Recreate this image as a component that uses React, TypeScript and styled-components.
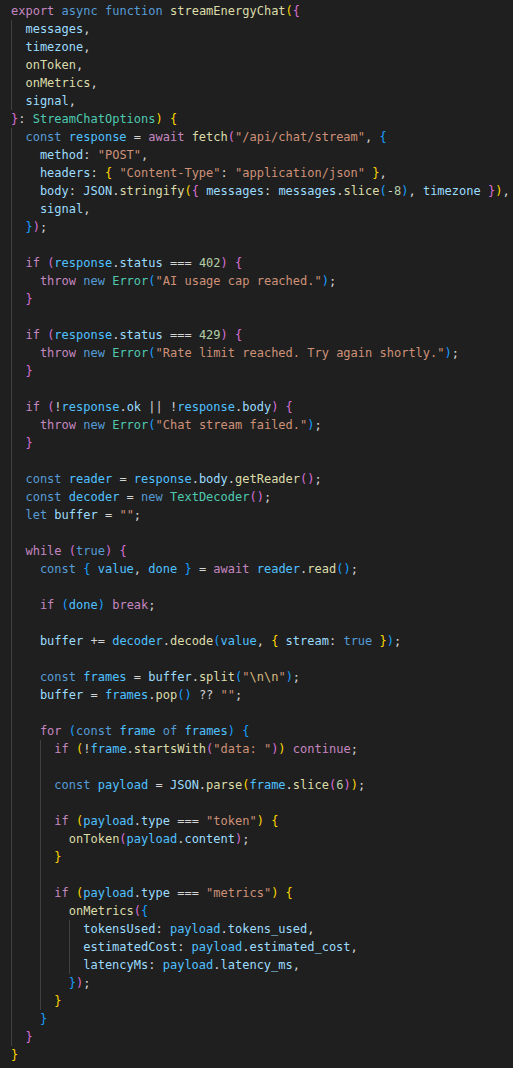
import React from "react";
import styled, { createGlobalStyle } from "styled-components";

const GlobalStyle = createGlobalStyle`
  html, body {
    margin: 0;
    padding: 0;
    background: #1f1f1f;
  }
  #root {
    min-height: 100vh;
  }
`;

const SOURCE = String.raw`«k|export» «s|async» «s|function» «f|streamEnergyChat»«b1|(»«b2|{»
  «v|messages»,
  «v|timezone»,
  «f|onToken»,
  «f|onMetrics»,
  «v|signal»,
«b2|}»: «t|StreamChatOptions»«b1|)» «b1|{»
  «s|const» «c|response» = «k|await» «f|fetch»«b2|(»«str|"/api/chat/stream"», «b3|{»
    «v|method»: «str|"POST"»,
    «v|headers»: «b1|{» «str|"Content-Type"»: «str|"application/json"» «b1|}»,
    «v|body»: «v|JSON».«f|stringify»«b1|(»«b2|{» «v|messages»: «v|messages».«f|slice»«b3|(»-«n|8»«b3|)», «v|timezone» «b2|}»«b1|)»,
    «v|signal»,
  «b3|}»«b2|)»;

  «k|if» «b2|(»«c|response».«v|status» === «n|402»«b2|)» «b2|{»
    «k|throw» «s|new» «t|Error»«b3|(»«str|"AI usage cap reached."»«b3|)»;
  «b2|}»

  «k|if» «b2|(»«c|response».«v|status» === «n|429»«b2|)» «b2|{»
    «k|throw» «s|new» «t|Error»«b3|(»«str|"Rate limit reached. Try again shortly."»«b3|)»;
  «b2|}»

  «k|if» «b2|(»!«c|response».«v|ok» || !«c|response».«v|body»«b2|)» «b2|{»
    «k|throw» «s|new» «t|Error»«b3|(»«str|"Chat stream failed."»«b3|)»;
  «b2|}»

  «s|const» «c|reader» = «c|response».«v|body».«f|getReader»«b2|()»;
  «s|const» «c|decoder» = «s|new» «t|TextDecoder»«b2|()»;
  «s|let» «v|buffer» = «str|""»;

  «k|while» «b2|(»«s|true»«b2|)» «b2|{»
    «s|const» «b3|{» «c|value», «c|done» «b3|}» = «k|await» «c|reader».«f|read»«b3|()»;

    «k|if» «b3|(»«c|done»«b3|)» «k|break»;

    «v|buffer» += «c|decoder».«f|decode»«b3|(»«c|value», «b1|{» «v|stream»: «s|true» «b1|}»«b3|)»;

    «s|const» «c|frames» = «v|buffer».«f|split»«b3|(»«str|"»«esc|\n\n»«str|"»«b3|)»;
    «v|buffer» = «c|frames».«f|pop»«b3|()» ?? «str|""»;

    «k|for» «b3|(»«s|const» «c|frame» «s|of» «c|frames»«b3|)» «b3|{»
      «k|if» «b1|(»!«c|frame».«f|startsWith»«b2|(»«str|"data: "»«b2|)»«b1|)» «k|continue»;

      «s|const» «c|payload» = «v|JSON».«f|parse»«b1|(»«c|frame».«f|slice»«b2|(»«n|6»«b2|)»«b1|)»;

      «k|if» «b1|(»«c|payload».«v|type» === «str|"token"»«b1|)» «b1|{»
        «f|onToken»«b2|(»«c|payload».«v|content»«b2|)»;
      «b1|}»

      «k|if» «b1|(»«c|payload».«v|type» === «str|"metrics"»«b1|)» «b1|{»
        «f|onMetrics»«b2|(»«b3|{»
          «v|tokensUsed»: «c|payload».«v|tokens_used»,
          «v|estimatedCost»: «c|payload».«v|estimated_cost»,
          «v|latencyMs»: «c|payload».«v|latency_ms»,
        «b3|}»«b2|)»;
      «b1|}»
    «b3|}»
  «b2|}»
«b1|}»`;

const COLORS: Record<string, string> = {
  p: "#d4d4d4",
  k: "#c586c0",
  s: "#569cd6",
  f: "#dcdcaa",
  v: "#9cdcfe",
  c: "#4fc1ff",
  t: "#4ec9b0",
  str: "#ce9178",
  n: "#b5cea8",
  esc: "#d7ba7d",
  b1: "#ffd700",
  b2: "#da70d6",
  b3: "#179fff",
};

type Token = { kind: string; text: string };
type CodeLine = { indent: number; guides: number[]; tokens: Token[] };

function parseLine(raw: string): { indent: number; blank: boolean; tokens: Token[] } {
  const blank = raw.trim().length === 0;
  const indent = blank ? 0 : raw.length - raw.trimStart().length;
  const body = raw.slice(indent);
  const tokens: Token[] = [];
  const re = /«(\w+)\|([^»]*)»/g;
  let last = 0;
  let m: RegExpExecArray | null;
  while ((m = re.exec(body))) {
    if (m.index > last) tokens.push({ kind: "p", text: body.slice(last, m.index) });
    tokens.push({ kind: m[1], text: m[2] });
    last = m.index + m[0].length;
  }
  if (last < body.length) tokens.push({ kind: "p", text: body.slice(last) });
  return { indent, blank, tokens };
}

const TAB = 4;

function chunksFor(indent: number): number[] {
  const out: number[] = [];
  let rest = indent;
  while (rest > 0) {
    out.push(Math.min(TAB, rest));
    rest -= TAB;
  }
  return out;
}

function buildLines(src: string): CodeLine[] {
  const parsed = src.split("\n").map(parseLine);
  return parsed.map((line, i) => {
    if (!line.blank) {
      return { indent: line.indent, guides: chunksFor(line.indent), tokens: line.tokens };
    }
    let prev = 0;
    for (let j = i - 1; j >= 0; j--) {
      if (!parsed[j].blank) {
        prev = parsed[j].indent;
        break;
      }
    }
    let next = 0;
    for (let j = i + 1; j < parsed.length; j++) {
      if (!parsed[j].blank) {
        next = parsed[j].indent;
        break;
      }
    }
    const ind = Math.min(prev, next);
    return { indent: ind, guides: chunksFor(ind), tokens: [] };
  });
}

const LINES = buildLines(SOURCE);

const Editor = styled.main`
  box-sizing: border-box;
  width: 513px;
  min-height: 1068px;
  padding: 2px 0 0 11px;
  background: #1f1f1f;
  font-family: "DejaVu Sans Mono", "Liberation Mono", monospace;
  font-size: 12px;
  color: #d4d4d4;
  overflow: hidden;
`;

const Line = styled.div`
  display: flex;
  align-items: stretch;
  height: 18px;
  line-height: 18px;
  white-space: pre;
`;

const Guide = styled.span<{ $cols: number }>`
  display: inline-block;
  flex: none;
  width: ${(p) => p.$cols}ch;
  box-shadow: inset 1px 0 0 #404040;
`;

const Code = styled.span`
  white-space: pre;
`;

const Tok = styled.span<{ $kind: string }>`
  color: ${(p) => COLORS[p.$kind] ?? COLORS.p};
`;

export default function App() {
  return (
    <>
      <GlobalStyle />
      <Editor>
        {LINES.map((line, i) => (
          <Line key={i}>
            {line.guides.map((cols, g) => (
              <Guide key={g} $cols={cols} />
            ))}
            <Code>
              {line.tokens.map((t, j) => (
                <Tok key={j} $kind={t.kind}>
                  {t.text}
                </Tok>
              ))}
            </Code>
          </Line>
        ))}
      </Editor>
    </>
  );
}
